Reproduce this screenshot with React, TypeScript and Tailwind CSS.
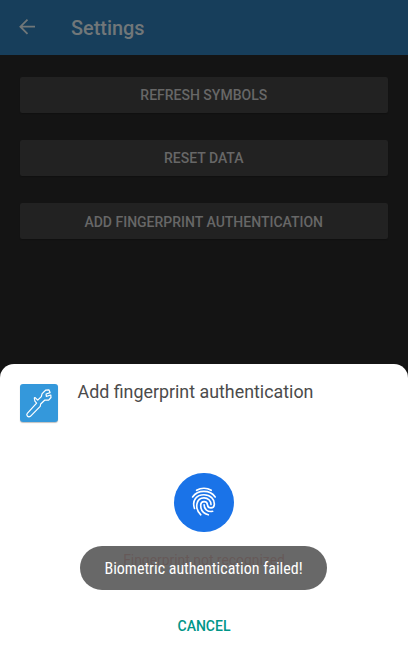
const actions = ["REFRESH SYMBOLS", "RESET DATA", "ADD FINGERPRINT AUTHENTICATION"];

function Header() {
  return (
    <header className="flex h-[55px] shrink-0 items-center bg-[#173e5b] pl-[19px] text-[#717779]">
      <svg width="16" height="16" viewBox="0 0 16 16" fill="none" stroke="currentColor" strokeWidth="1.8" className="-mt-px">
        <path d="M16 7.7H1.4M8.5 .7L1.4 7.7L8.5 14.8" />
      </svg>
      <h1 className="ml-9 pt-0.5 text-[19.9px] leading-6 font-medium">Settings</h1>
    </header>
  );
}

function WrenchLogo() {
  return (
    <div className="flex h-[38px] w-[38px] shrink-0 items-center justify-center rounded-[3px] bg-[#3498db] shadow-[0_1px_1px_rgba(0,0,0,0.25)]">
      <svg width="38" height="38" viewBox="0 0 38 38" fill="none" stroke="white" strokeWidth="1.2" strokeLinejoin="round" strokeLinecap="round">
        <path d="M7.3 29.3L16.6 19.2L14.9 17.2L14.3 14Q14.7 13.3 15.4 13.8L17.7 16.2L21.3 12.6L22.1 9.6L25.6 6.2L28.9 5.8L30.1 8.6L26.1 10L26.3 12.3L30.8 11L31 13.5L28.7 16.2L24.6 16.2L20.7 20L20.2 22.4L10.4 32.3Q8.8 33.5 7.3 32Q6.2 30.6 7.3 29.3Z" />
      </svg>
    </div>
  );
}

function Fingerprint() {
  return (
    <svg width="32" height="36" viewBox="0 0 32 36" fill="none" stroke="white" strokeWidth="1.65" strokeLinecap="round">
      <path d="M8.6 6.3C13 3.7 19 3.7 23.2 6.3" />
      <path d="M4.6 13C9.8 5.5 22 5.5 27.2 13" />
      <path d="M6.5 24.5C3.6 16 8.8 10.7 15.9 10.7C22.5 10.7 26.7 15.3 26.3 20.6C26 25 20 25 19.5 20.8C19 16.3 12.8 16.7 12.7 21C12.6 25.9 15.7 29.6 20.3 30.8" />
      <path d="M12.8 30.8C6 24.2 8.3 13.8 16 13.8C20 13.8 23 16.8 23 20.6" />
      <path d="M16.1 20.8C16.2 25.4 19.6 28.2 24.6 27.3" />
    </svg>
  );
}

export default function App() {
  return (
    <div className="relative flex h-[653px] w-[408px] flex-col overflow-hidden bg-[#141414] font-['Roboto',sans-serif]">
      <Header />
      <main className="flex h-[309px] shrink-0 flex-col gap-[27.6px] pr-5 pl-[19.5px] pt-[22px]">
        {actions.map((action) => (
          <button
            key={action}
            className="h-[35.6px] shrink-0 rounded-xs bg-[#222] pt-0.5 text-[14px] font-medium text-[#676767] shadow-[0_1px_1px_rgba(0,0,0,0.2)]"
          >
            {action}
          </button>
        ))}
      </main>
      <section className="flex flex-1 flex-col items-center rounded-t-[14px] bg-white">
        <div className="flex w-full gap-5 pt-5 pl-[19.5px]">
          <WrenchLogo />
          <h2 className="-mt-1 text-[17.85px] leading-6 text-[#4b4b4b]">Add fingerprint authentication</h2>
        </div>
        <div className="mt-[50.5px] flex h-[59.5px] w-[59.5px] items-center justify-center rounded-full bg-[#1a73e8]">
          <Fingerprint />
        </div>
        <p className="mt-[18px] text-[13.9px] leading-5 text-[#d93025]">Fingerprint not recognized</p>
        <button className="mt-[46px] text-[14px] leading-5 font-medium text-[#009688]">CANCEL</button>
      </section>
      <div className="absolute top-[546px] left-[80px] flex h-[43.5px] w-[247px] items-center justify-center rounded-full bg-[#5c5c5c]/93 pt-0.5 text-[16px] whitespace-nowrap text-white">
        <span className="font-['Roboto_Condensed','Roboto',sans-serif] [font-stretch:condensed]">Biometric authentication failed!</span>
      </div>
    </div>
  );
}
